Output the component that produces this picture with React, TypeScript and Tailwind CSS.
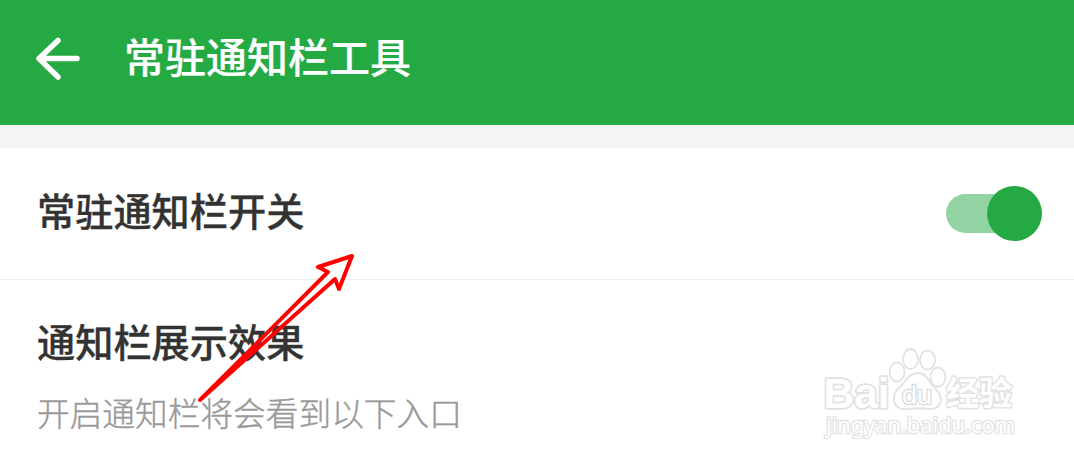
import type { ReactNode } from "react";

function BackArrow() {
  return (
    <svg
      width="46"
      height="46"
      viewBox="0 0 46 46"
      fill="none"
      stroke="#fff"
      strokeWidth="5.5"
      strokeLinecap="round"
      strokeLinejoin="round"
    >
      <path d="M24 5.5 5 23.5l19 18.5M6 23.5h37" />
    </svg>
  );
}

function Switch({ checked }: { checked: boolean }) {
  return (
    <button
      role="switch"
      aria-checked={checked}
      className="flex h-[39px] w-24 items-center justify-end rounded-full bg-[#92d4a3]"
    >
      <span className="size-[55px] shrink-0 rounded-full bg-[#25aa43]" />
    </button>
  );
}

function RowTitle({ children }: { children: ReactNode }) {
  return (
    <h2 className="text-[38.2px] leading-[56px] font-medium text-[#333] [-webkit-text-stroke:0.3px_#333]">
      {children}
    </h2>
  );
}

function Watermark() {
  return (
    <svg
      className="absolute top-[340px] left-[815px]"
      width="210"
      height="105"
      viewBox="0 0 210 105"
      fill="#fff"
      stroke="#e2e2e2"
      strokeWidth="1.8"
    >
      <g paintOrder="stroke" strokeLinejoin="round">
        <text
          x="8.5"
          y="68"
          fontFamily="Liberation Sans, sans-serif"
          fontWeight="700"
          fontSize="43"
          strokeWidth="3.5"
          textLength="66"
          lengthAdjust="spacingAndGlyphs"
        >
          Bai
        </text>
        <text
          x="131"
          y="65"
          fontFamily="Noto Sans CJK SC, sans-serif"
          fontWeight="700"
          fontSize="33"
          strokeWidth="3"
        >
          经验
        </text>
        <text
          x="11"
          y="93"
          fontFamily="Noto Sans, sans-serif"
          fontWeight="400"
          fontSize="22"
          strokeWidth="2.5"
          textLength="189"
          lengthAdjust="spacingAndGlyphs"
        >
          jingyan.baidu.com
        </text>
      </g>
      <ellipse cx="82" cy="32" rx="7.5" ry="9.5" />
      <ellipse cx="95.5" cy="19" rx="7.5" ry="10" />
      <ellipse cx="112.5" cy="20" rx="7.5" ry="9.5" />
      <ellipse cx="123" cy="37" rx="7.5" ry="9.5" />
      <path d="M103 33c-9 0-12 8-17 13-5 4-8 8-7 14 1 7 6 10 13 9 7-1 14-1 21 0 8 1 13-3 13-10 0-6-5-9-9-14-4-6-7-12-14-12Z" />
      <text
        x="87"
        y="64"
        fontFamily="Liberation Sans, sans-serif"
        fontSize="26"
        strokeWidth="2.5"
        stroke="#dadada"
        paintOrder="stroke"
        textLength="30"
        lengthAdjust="spacingAndGlyphs"
      >
        du
      </text>
    </svg>
  );
}

function PointerArrow() {
  return (
    <svg
      className="absolute top-[240px] left-[180px]"
      width="190"
      height="170"
      viewBox="0 0 190 170"
      fill="none"
      stroke="#f00"
      strokeWidth="4"
      strokeLinecap="round"
      strokeLinejoin="round"
    >
      <path d="M20 160 148 32 138 27 172 16 159 49 155 39Z" />
    </svg>
  );
}

export default function App() {
  return (
    <div className="relative h-[464px] w-[1074px] overflow-hidden bg-white font-['Noto_Sans_CJK_SC',sans-serif]">
      <header className="flex h-[125px] items-start bg-[#25aa43] pt-[27px] pl-[34px] text-white">
        <div className="flex h-[62px] items-center">
          <BackArrow />
          <h1 className="-mt-[7px] ml-11 text-[41px] leading-[62px] font-medium [-webkit-text-stroke:0.2px_#fff]">
            常驻通知栏工具
          </h1>
        </div>
      </header>
      <div className="h-[23px] bg-[#f4f4f4]" />
      <main>
        <section className="flex h-[132px] items-center justify-between border-b border-[#ededed] pr-8 pl-[37px]">
          <div className="pb-[7px]">
            <RowTitle>常驻通知栏开关</RowTitle>
          </div>
          <Switch checked />
        </section>
        <section className="pt-[33px] pl-[37px]">
          <RowTitle>通知栏展示效果</RowTitle>
          <p className="mt-[19px] text-[32.7px] leading-[48px] font-light text-[#999] [-webkit-text-stroke:0.4px_#999]">
            开启通知栏将会看到以下入口
          </p>
        </section>
      </main>
      <Watermark />
      <PointerArrow />
    </div>
  );
}
